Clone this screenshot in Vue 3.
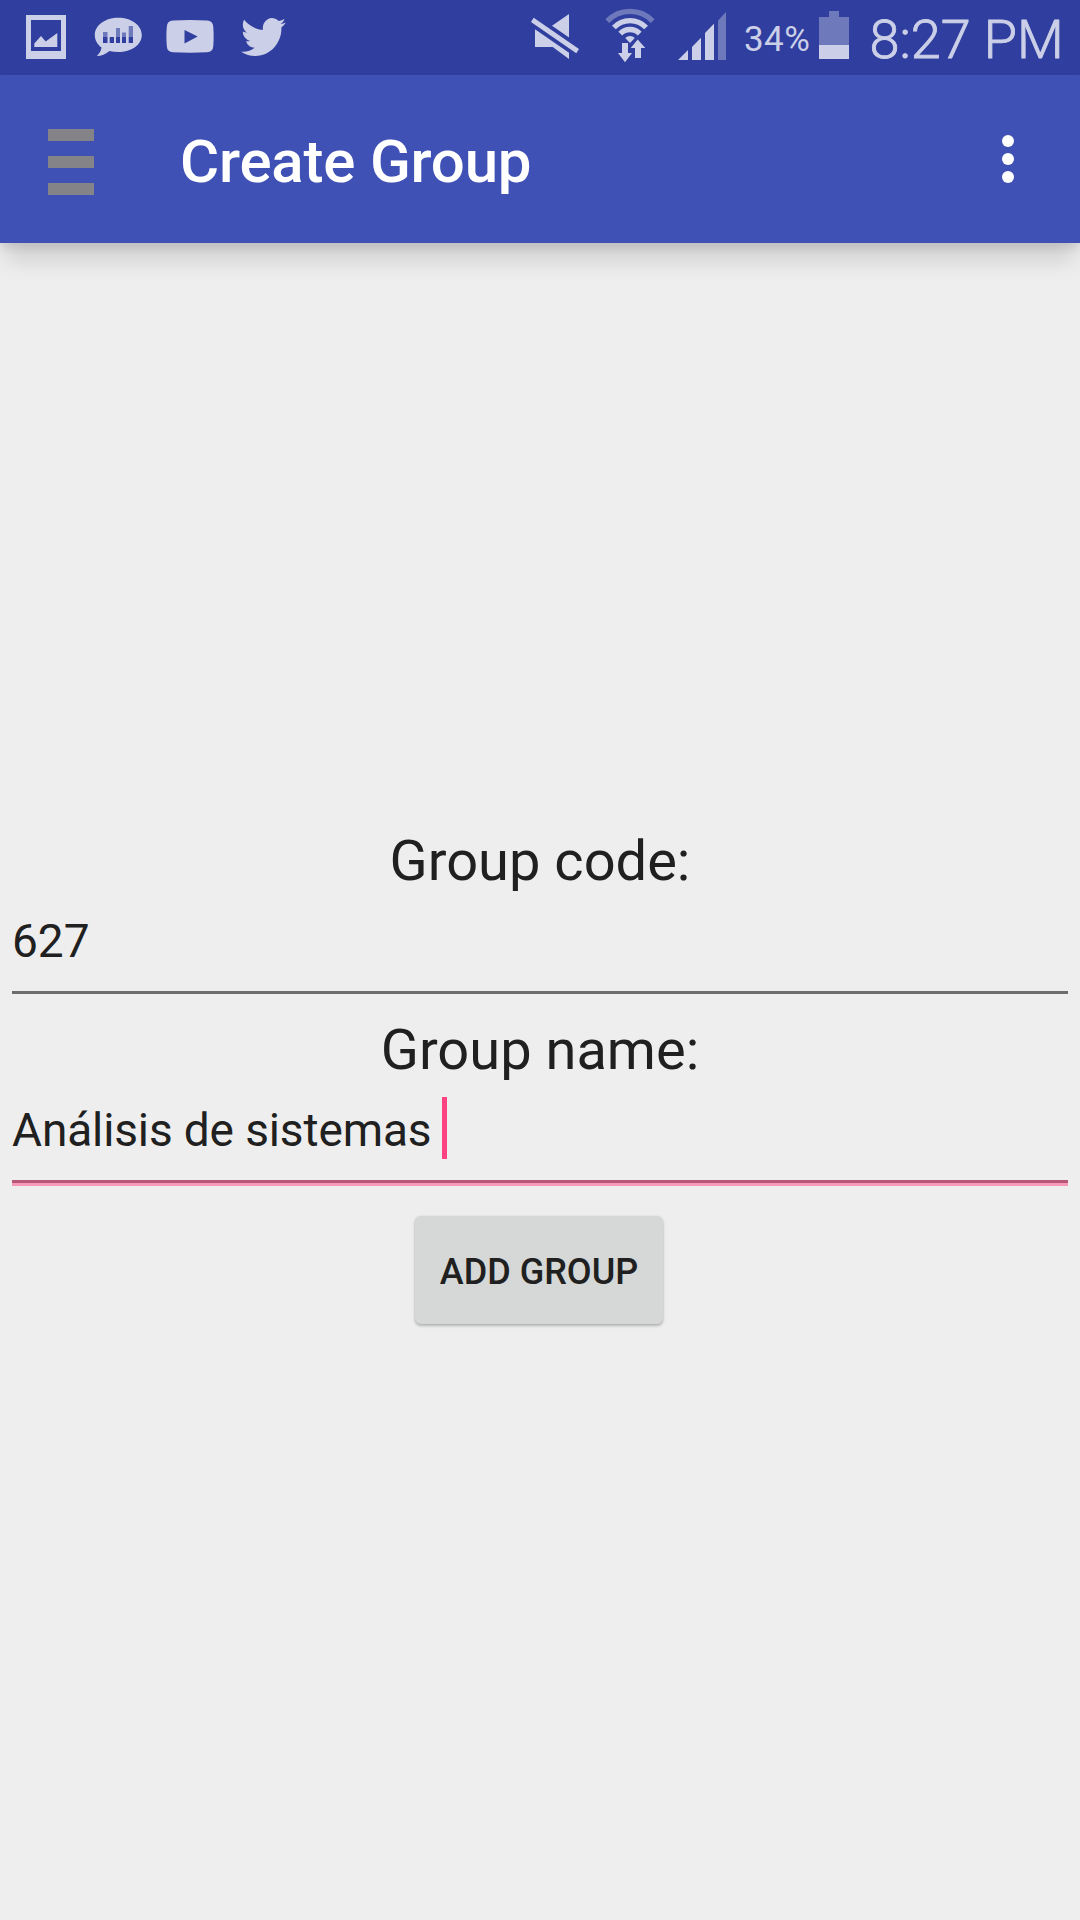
<script setup>
import { ref } from 'vue'

const groupCode = ref('627')
const groupName = ref('Análisis de sistemas')
</script>

<template>
  <div class="screen">
    <header class="status">
      <svg class="picture" width="40" height="44" viewBox="26 15 40 44">
        <path fill-rule="evenodd" d="M26 15h40v44H26zM31 20v31h30V20z" />
        <path d="M34.3 43.5 41 36l4.7 5.4L57.3 33v14h-23z" />
      </svg>
      <svg class="bubble" width="48" height="40" viewBox="94 17 48 40">
        <path d="M118.3 17.7C131.500 17.700 141.800 25.300 141.800 34.900S131.500 52 118.300 52Q113.500 52 109.500 51C106 54 101 56 96.800 56Q101 52 101.500 47.500C97.500 44.500 94.800 40 94.800 34.900 94.800 25.300 105.100 17.700 118.300 17.700z" />
        <path class="mid" d="M103 32h4.500v5H103zM116 28h4v9h-4zM122 32.500h4v4.500h-4zM128.700 26h4.300v11h-4.300z" />
        <path class="dark" d="M103 37h4.500v6H103zM109.700 37h4.300v6h-4.300zM116 37h4v6h-4zM122 37h4v6h-4zM128.700 37h4.300v6h-4.300z" />
      </svg>
      <svg class="video" width="48" height="34" viewBox="166 20 48 34">
        <path fill-rule="evenodd" d="M173 20.600Q190 19.600 207 20.600 213 21 213.300 27 214 36.500 213.300 46 213 52 207 52.300 190 53.200 173 52.300 167 52 166.800 46 166 36.500 166.800 27 167 21 173 20.600zM184.500 30v13.500L197.700 36.600z" />
      </svg>
      <svg class="bird" width="45" height="38" viewBox="0 2.200 24 19.600" preserveAspectRatio="none">
        <path d="M23.953 4.570a10 10 0 0 1-2.825.775 4.958 4.958 0 0 0 2.163-2.723c-.951.555-2.005.959-3.127 1.184a4.920 4.920 0 0 0-8.384 4.482C7.690 8.095 4.067 6.130 1.640 3.162a4.822 4.822 0 0 0-.666 2.475c0 1.710.870 3.213 2.188 4.096a4.904 4.904 0 0 1-2.228-.616v.060a4.923 4.923 0 0 0 3.946 4.827 4.996 4.996 0 0 1-2.212.085 4.936 4.936 0 0 0 4.604 3.417 9.867 9.867 0 0 1-6.102 2.105c-.390 0-.779-.023-1.170-.067a13.995 13.995 0 0 0 7.557 2.209c9.053 0 13.998-7.496 13.998-13.985 0-.210 0-.420-.015-.630A9.935 9.935 0 0 0 23.953 4.570z" />
      </svg>

      <svg class="mute" width="50" height="48" viewBox="530 13 50 48">
        <path d="M533.700 17.700 579 49l-2.700 4.300L531 22zM569 14v23.500L552 25.700zM535 29.300 569 52.700V59L552.700 47H535z" />
      </svg>
      <svg class="wifi" width="52" height="56" viewBox="604 8 52 56">
        <path class="arc faded" d="M607.300 21.100a31.500 31.500 0 0 1 45.400 0" />
        <path class="arc" d="M613.900 27.500a22.300 22.300 0 0 1 32.200 0M620.300 33.600a13.500 13.500 0 0 1 19.400 0" />
        <path d="M625.200 38a6.900 6.900 0 0 1 9.600 0L630 43z" />
        <path d="M622 43h6v10h4l-7 9.200-7-9.200h4z" />
        <path class="cut" d="M637.700 39.500 645.300 48H641v10h-6V48h-4.300z" />
      </svg>
      <svg class="signal" width="48" height="50" viewBox="678 11 48 50">
        <path d="M678 60l10-10v10zM692 60V47l9-9.300V60zM705 60V33l9-9.300V60z" />
        <path class="faded" d="M718 60V20.500l8-8.500v48z" />
      </svg>
      <span class="percent">34%</span>
      <svg class="battery" width="30" height="48" viewBox="819 11 30 48">
        <path class="faded" d="M829 11h10v6h10v28h-30V17h10z" />
        <path d="M819 45h30v14h-30z" />
      </svg>
      <span class="time">8:27 PM</span>
    </header>

    <nav class="appbar">
      <div class="menu"><i></i><i></i><i></i></div>
      <h1>Create Group</h1>
      <div class="more"><i></i><i></i><i></i></div>
    </nav>

    <main>
      <label>Group code:</label>
      <div class="field"><span class="code">{{ groupCode }}</span></div>
      <label class="second">Group name:</label>
      <div class="field focused">
        <span class="name">{{ groupName }}</span><b class="caret"></b>
      </div>
      <button><span>ADD GROUP</span></button>
    </main>
  </div>
</template>

<style>
body {
  margin: 0;
  background: #eeeeee;
}
</style>

<style scoped>
.screen {
  width: 1080px;
  height: 1920px;
  overflow: hidden;
  display: flex;
  flex-direction: column;
  background: #eeeeee;
  color: #202020;
  font-family: Roboto, sans-serif;
}
.status {
  height: 75px;
  flex: none;
  display: flex;
  align-items: flex-start;
  background: #303f9f;
  color: #cbcfe7;
  white-space: nowrap;
}
.status svg {
  flex: none;
  fill: #cbcfe7;
}
.status .mid { fill: #6e79bc; }
.status .dark { fill: #303f9f; }
.status .faded { fill: #6e79bc; }
.status .arc { fill: none; stroke: #cbcfe7; stroke-width: 5.3; }
.status .arc.faded { stroke: #6e79bc; }
.status .cut { stroke: #303f9f; stroke-width: 3; paint-order: stroke; }
.picture { margin: 15px 0 0 26px; }
.bubble { margin: 17px 0 0 28px; }
.video { margin: 20px 0 0 24px; }
.bird { margin: 18px 0 0 27px; }
.mute { margin: 13px 0 0 244px; }
.wifi { margin: 8px 0 0 24px; }
.signal { margin: 11px 0 0 22px; }
.percent {
  width: 75px;
  flex: none;
  margin: 0 0 0 18px;
  font-size: 35px;
  letter-spacing: 0.4px;
  line-height: 80px;
}
.battery { margin: 11px 0 0 0; }
.time {
  margin-left: 20.500px;
  font-size: 54px;
  font-weight: 300;
  -webkit-text-stroke: 0.9px #cbcfe7;
  line-height: 79px;
}
.appbar {
  height: 168px;
  flex: none;
  display: flex;
  align-items: flex-start;
  background: #3f51b5;
  box-shadow: 0 5px 8px 0 rgba(0, 0, 0, 0.09), 0 24px 20px -6px rgba(0, 0, 0, 0.12);
}
.menu {
  width: 46px;
  flex: none;
  margin: 54px 0 0 48px;
  display: flex;
  flex-direction: column;
  gap: 15px;
}
.menu i {
  height: 12px;
  background: #838388;
}
h1 {
  margin: 0 0 0 86px;
  flex: 1;
  color: #fff;
  font-size: 60px;
  font-weight: 500;
  letter-spacing: -0.2px;
  line-height: 173px;
}
.more {
  margin: 60px 66px 0 0;
  display: flex;
  flex-direction: column;
  gap: 6px;
}
.more i {
  width: 12px;
  height: 12px;
  border-radius: 50%;
  background: #fff;
}
main {
  padding: 585px 12px 0;
  display: flex;
  flex-direction: column;
}
label {
  height: 66px;
  font-size: 56px;
  line-height: 66px;
  text-align: center;
}
.field {
  height: 97px;
  margin-bottom: 26px;
  display: flex;
  border-bottom: 3px solid #6d6d6d;
  font-size: 46px;
  line-height: 94px;
}
.second {
  margin-top: -3px;
}
.name {
  letter-spacing: -0.12px;
}
.focused {
  height: 97px;
  border-bottom-color: #b95679;
  box-shadow: 0 3px #f799b8;
}
.caret {
  width: 5px;
  height: 62px;
  margin: 14px 0 0 11px;
  background: #ff4081;
}
button {
  width: 248px;
  height: 108px;
  margin: 7px 0 0 403px;
  padding: 0;
  border: 0;
  border-radius: 6px;
  background: #d6d8d7;
  box-shadow: 0 2px 3px rgba(0, 0, 0, 0.24), 0 0 2px rgba(0, 0, 0, 0.1);
  color: #202020;
  font: 500 36px/112px Roboto, sans-serif;
}
button span {
  display: block;
  height: 108px;
}
</style>
